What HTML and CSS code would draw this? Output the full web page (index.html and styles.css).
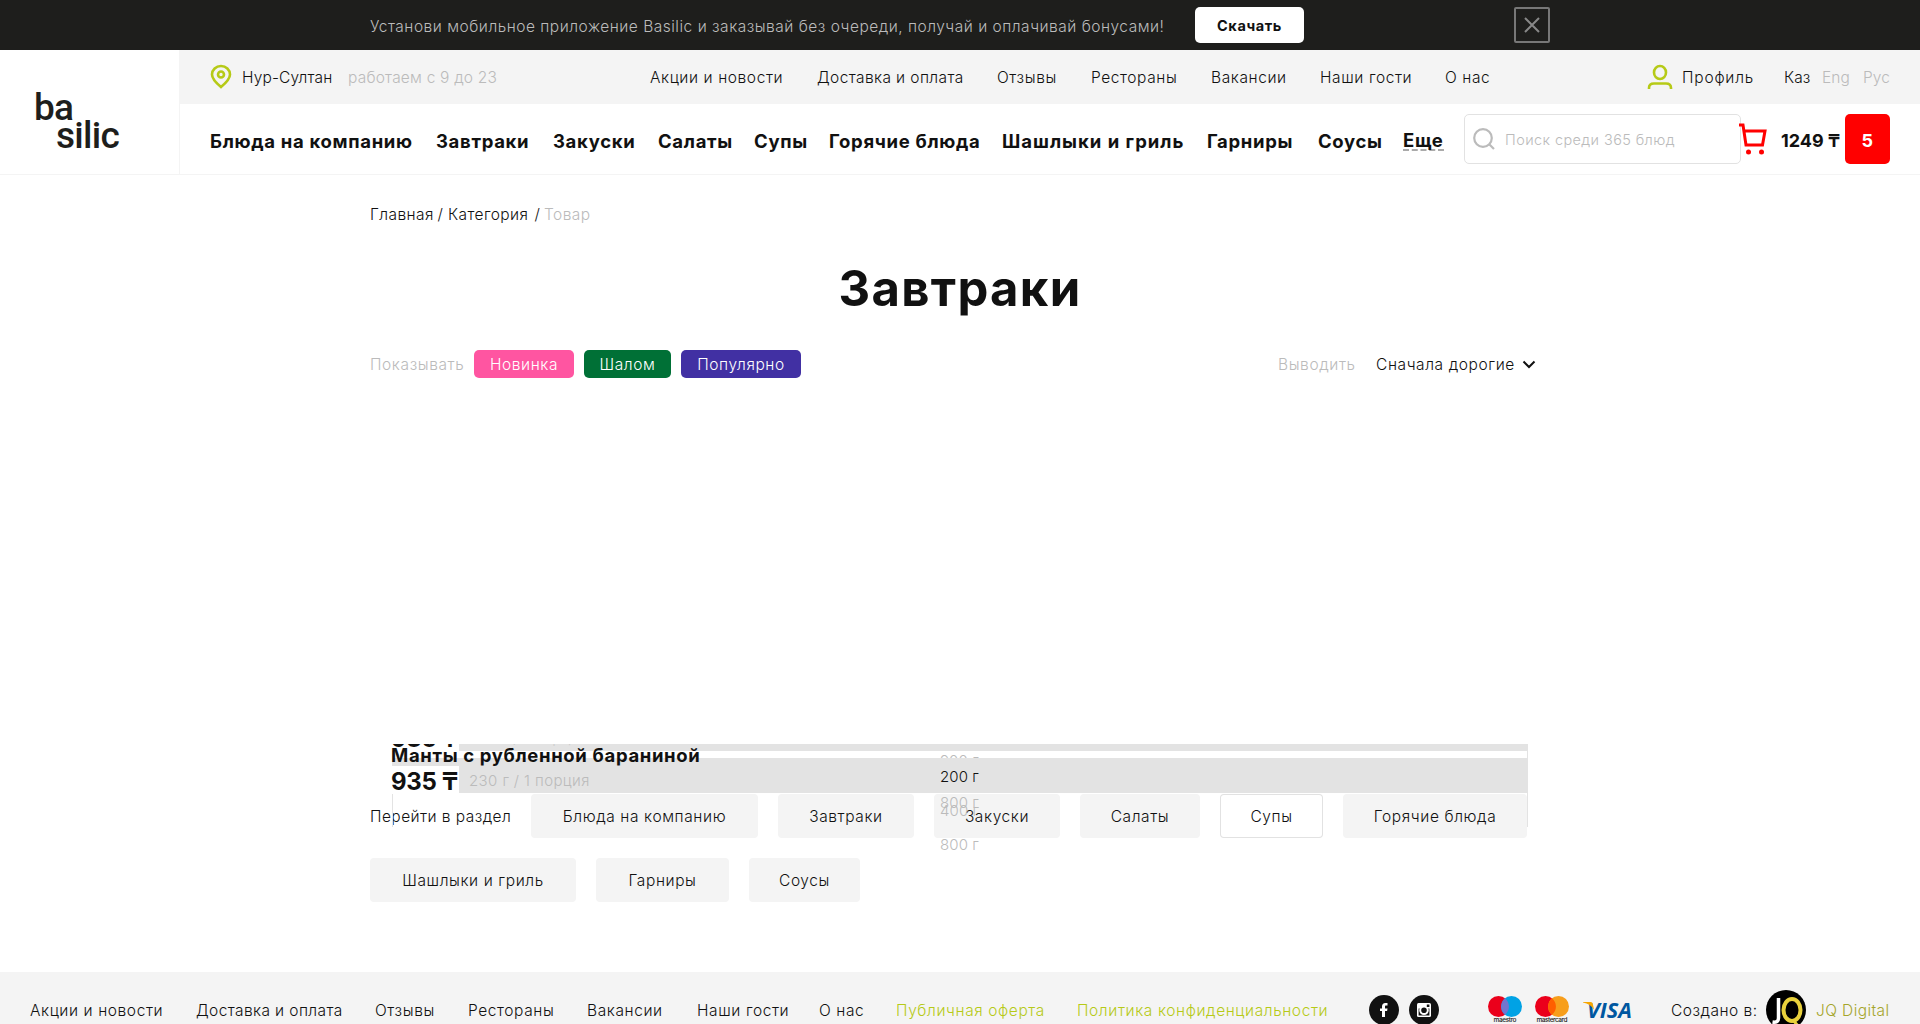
FILE: index.html
```html
<!DOCTYPE html>
<html lang="ru">
<head>
<meta charset="utf-8">
<title>Basilic — Завтраки</title>
<link rel="stylesheet" href="styles.css">
</head>
<body>
<div class="promo">
  <p class="promo-text">Установи мобильное приложение Basilic и заказывай без очереди, получай и оплачивай бонусами!</p>
  <a class="promo-button">Скачать</a>
  <button class="promo-close" aria-label="Закрыть"><svg width="18" height="18" viewBox="0 0 18 18"><path d="M2 2l14 14M16 2L2 16"/></svg></button>
</div>
<header class="header">
  <a class="logo"><span class="logo-top">ba</span><span class="logo-bottom">silic</span></a>
  <div class="header-body">
    <div class="header-info">
      <svg class="pin" width="22" height="24" viewBox="0 0 22 24"><path d="M11 22C5 17 2 13.500 2 9.500a9 8.500 0 0 1 18 0C20 13.500 17 17 11 22z"/><circle cx="11" cy="9.500" r="3"/></svg>
      <span class="city">Нур-Султан</span>
      <span class="hours">работаем с 9 до 23</span>
      <nav class="info-nav"><a>Акции и новости</a><a class="snug">Доставка и оплата</a><a>Отзывы</a><a>Рестораны</a><a>Вакансии</a><a>Наши гости</a><a>О нас</a></nav>
      <svg class="user" width="26" height="26" viewBox="0 0 26 26"><ellipse cx="13" cy="8.500" rx="6" ry="6.500"/><path d="M2 25v-1c0-3 2-4.500 5-4.500h12c3 0 5 1.500 5 4.500v1"/></svg>
      <span class="profile">Профиль</span>
      <nav class="langs"><a class="lang-active">Каз</a><a>Eng</a><a>Рус</a></nav>
    </div>
    <div class="header-menu">
      <nav class="menu-nav"><a>Блюда на компанию</a><a>Завтраки</a><a>Закуски</a><a>Салаты</a><a>Супы</a><a>Горячие блюда</a><a class="loose">Шашлыки и гриль</a><a>Гарниры</a><a>Соусы</a><a class="more">Еще</a></nav>
      <div class="search"><svg width="22" height="22" viewBox="0 0 22 22"><circle cx="10" cy="10" r="8.800"/><path d="M16 16l5 5"/></svg><span>Поиск среди 365 блюд</span></div>
      <svg class="cart" width="27" height="32" viewBox="0 0 27 32"><path d="M0 2h4l3 20h16.500L26 8H5"/><circle cx="9.500" cy="29" r="2.500"/><circle cx="22.500" cy="29" r="2.500"/></svg>
      <span class="total">1249 ₸</span>
      <span class="count">5</span>
    </div>
  </div>
</header>
<main class="content">
  <div class="crumbs"><a>Главная</a><i>/</i><a>Категория</a><i>/</i><span>Товар</span></div>
  <h1 class="title">Завтраки</h1>
  <div class="filters">
    <span class="filter-label">Показывать</span>
    <a class="tag tag-new">Новинка</a><a class="tag tag-shalom">Шалом</a><a class="tag tag-popular">Популярно</a>
    <span class="sort-label">Выводить</span>
    <span class="sort-value">Сначала дорогие</span>
    <svg class="chevron" width="14" height="9" viewBox="0 0 14 9"><path d="M1.500 1.500L7 7l5.500-5.500"/></svg>
  </div>
  <section class="products">
    <div class="band band-thin"></div>
    <div class="band band-wide"></div>
    <div class="card-side"></div>
    <div class="clipped"><span class="old-price">935 ₸</span><span class="old-portion">230 г / 1 порция</span></div>
    <div class="price-back"></div>
    <span class="dish">Манты с рубленной бараниной</span>
    <span class="price">935 ₸</span>
    <span class="portion">230 г / 1 порция</span>
    <span class="option-cut"><span>900 г</span></span>
    <span class="option option-on">200 г</span>
    <span class="option option-b">800 г</span>
    <span class="option option-c">400 г</span>
    <span class="option option-d">800 г</span>
  </section>
  <nav class="sections">
    <span class="sections-label">Перейти в раздел</span>
    <a class="w1">Блюда на компанию</a><a class="w2">Завтраки</a><a class="w3">Закуски</a><a class="w4">Салаты</a><a class="w5 current">Супы</a><a class="w6">Горячие блюда</a><a class="w7">Шашлыки и гриль</a><a class="w8">Гарниры</a><a class="w9">Соусы</a>
  </nav>
</main>
<footer class="footer">
  <nav class="footer-nav"><a>Акции и новости</a><a class="snug">Доставка и оплата</a><a>Отзывы</a><a>Рестораны</a><a>Вакансии</a><a>Наши гости</a><a>О нас</a><a class="legal">Публичная оферта</a><a class="legal">Политика конфиденциальности</a></nav>
  <svg class="facebook" width="30" height="30" viewBox="0 0 30 30"><circle cx="15" cy="15" r="15" fill="#111"/><path d="M13 22v-6h-2v-2.600h2v-1.900c0-2.300 1.300-3.500 3.300-3.500h2.200v2.500h-1.300c-1 0-1.200.5-1.200 1.300v1.600h2.500l-.4 2.600H16V22z" fill="#fff"/></svg>
  <svg class="instagram" width="30" height="30" viewBox="0 0 30 30"><circle cx="15" cy="15" r="15" fill="#111"/><rect x="8" y="8" width="14" height="14" rx="1.500" fill="#fff"/><path d="M9.600 13.500h2v-.5h7v.5h1.800v7H9.600z" fill="#111"/><circle cx="15" cy="15.300" r="3.800" fill="#111" stroke="#fff" stroke-width="2"/><path d="M17.800 9.500h2.600v2.500h-2.600z" fill="#111"/></svg>
  <svg class="maestro" width="34" height="30" viewBox="0 0 34 30"><circle cx="10.500" cy="11.500" r="10.500" fill="#eb001b"/><circle cx="23.500" cy="11.500" r="10.500" fill="#00a2e5"/><path d="M17 3.300a10.500 10.500 0 0 1 0 16.400a10.500 10.500 0 0 1 0-16.400z" fill="#7375cf"/><text x="17" y="27" textLength="23" text-anchor="middle">maestro</text></svg>
  <svg class="mastercard" width="34" height="30" viewBox="0 0 34 30"><circle cx="10.500" cy="11.500" r="10.500" fill="#eb001b"/><circle cx="23.500" cy="11.500" r="10.500" fill="#f79e1b"/><path d="M17 3.300a10.500 10.500 0 0 1 0 16.400a10.500 10.500 0 0 1 0-16.400z" fill="#ff5f00"/><text x="17" y="27" textLength="31" text-anchor="middle">mastercard</text></svg>
  <svg class="visa" width="50" height="18" viewBox="0 0 50 18"><text x="4" y="16.500" textLength="45" lengthAdjust="spacingAndGlyphs">VISA</text><path d="M0 1h7.500c1.500 0 2 .7 2.300 2l1.400 6C9 5 5 2.500 0 1.600z" fill="#f7a600"/></svg>
  <span class="made">Создано в:</span>
  <svg class="jq" width="40" height="40" viewBox="0 0 40 40"><circle cx="20" cy="20" r="20" fill="#000"/><path d="M12.500 8v20q0 5-6 4" fill="none" stroke="#fff" stroke-width="3.500"/><ellipse cx="26" cy="20" rx="8.500" ry="11" fill="none" stroke="#e9d13c" stroke-width="4"/><path d="M27 30l5 6" stroke="#e9d13c" stroke-width="3"/></svg>
  <span class="agency">JQ Digital</span>
</footer>
</body>
</html>
```
FILE: styles.css
```css
* { box-sizing: border-box; }
html { overflow: hidden; }
body { margin: 0; height: 1024px; overflow: hidden; background: #fff; color: #111; font: 300 15.5px/20px Inter, "Noto Sans", sans-serif; letter-spacing: .6px; white-space: nowrap; }
svg { display: block; flex: none; overflow: visible; }
p, h1 { margin: 0; }
.snug { letter-spacing: .4px; }

.promo { height: 50px; padding: 3px 0 3px 370px; display: flex; align-items: center; background: #1e1e1c; color: #bbb; }
.promo-text { width: 825px; padding-top: 3px; letter-spacing: .51px; }
.promo-button { width: 109px; height: 36px; border-radius: 5px; background: #fff; color: #111; font-weight: 700; font-size: 14.5px; line-height: 37px; text-align: center; }
.promo-close { width: 36px; height: 36px; margin-left: 210px; padding: 7px; border: 2px solid #777; border-radius: 2px; background: none; }
.promo-close svg { fill: none; stroke: #888; stroke-width: 2; }

.header { display: flex; height: 125px; border-bottom: 1px solid #f4f4f4; }
.logo { width: 180px; padding: 44px 0 0 34px; border-right: 1px solid #f4f4f4; color: #1e1e1c; font: 500 37px/28px Roboto, sans-serif; letter-spacing: -.7px; }
.logo span { display: block; }
.logo-bottom { padding-left: 22px; }
.header-body { width: 1740px; }
.header-info { height: 54px; padding: 1px 0 0 30px; display: flex; align-items: center; background: #f4f4f4; }
.pin, .user { margin-top: -2px; fill: none; stroke: #b6ca17; stroke-width: 2.6; }
.city { width: 106px; margin-left: 10px; letter-spacing: .15px; }
.hours { width: 302px; color: #bbb; letter-spacing: .2px; }
.info-nav { display: grid; grid-template-columns: 167px 180px 94px 120px 109px 125px 202px; }
.profile { width: 102px; margin-left: 9px; letter-spacing: .8px; }
.langs { display: grid; grid-template-columns: 38px 41px 28px; color: #bbb; letter-spacing: .1px; }
.lang-active { color: #111; }
.header-menu { height: 70px; padding-left: 30px; display: flex; align-items: center; font-size: 18.5px; font-weight: 700; letter-spacing: .68px; }
.menu-nav { padding-top: 3px; display: grid; grid-template-columns: 226px 117px 105px 96px 75px 173px 205px 111px 85px 61px; align-items: center; }
.loose { letter-spacing: 1px; }
.more { width: 41px; line-height: 18px; border-bottom: 2px dashed #aaa; }
.search { width: 277px; height: 50px; padding-left: 8px; display: flex; align-items: center; gap: 10px; border: 1px solid #e2e2e2; border-radius: 5px; color: #bbb; font-size: 14.5px; font-weight: 300; letter-spacing: .4px; }
.search span { padding-top: 2px; }
.search svg { fill: none; stroke: #bbb; stroke-width: 2.2; }
.cart { margin-left: -2px; fill: none; stroke: red; stroke-width: 3; }
.cart circle { fill: red; stroke: none; }
.total { width: 64px; margin-left: 15px; padding-top: 3px; font-size: 18px; letter-spacing: 0; }
.count { width: 45px; height: 50px; border-radius: 5px; background: red; color: #fff; font-size: 18px; line-height: 53px; text-align: center; }

.content { width: 1180px; height: 797px; margin-left: 370px; }
.crumbs { padding-top: 30px; display: flex; letter-spacing: .4px; }
.crumbs a { width: 63px; }
.crumbs a + i + a { width: 83px; }
.crumbs i { width: 15px; font-style: normal; text-align: center; }
.crumbs a + i + a + i { width: 13px; }
.crumbs i + span { color: #bbb; }
.title { margin-top: 34px; text-align: center; font-size: 49px; line-height: 60px; font-weight: 700; letter-spacing: 1.3px; }
.filters { height: 28px; margin-top: 31px; display: flex; align-items: center; letter-spacing: .6px; }
.filter-label { width: 104px; color: #bbb; }
.filter-label, .sort-label, .sort-value { padding-top: 1px; }
.tag { height: 28px; margin-right: 10px; border-radius: 5px; color: #fff; text-align: center; line-height: 29px; }
.tag-new { width: 100px; background: #ff55a1; }
.tag-shalom { width: 87px; background: #007036; }
.tag-popular { width: 120px; background: #4130a3; }
.sort-label { width: 98px; margin-left: 467px; color: #bbb; }
.sort-value { width: 146px; }
.chevron { fill: none; stroke: #111; stroke-width: 2; }

/* Collapsed carousel: the cards' layers overlap one another */
.products { position: relative; height: 416px; }
.products > * { position: absolute; }
.band { right: 22px; background: #e3e3e3; }
.band-thin { left: 89px; top: 366px; height: 7px; }
.band-wide { left: 22px; top: 380px; height: 35px; }
.card-side { left: 22px; right: 22px; top: 373px; height: 76px; border: solid #e3e3e3; border-width: 0 1px; }
.price-back { left: 22px; top: 388px; width: 67px; height: 28px; background: #fff; }
.clipped { left: 21px; top: 366px; width: 230px; height: 4px; overflow: hidden; }
.old-price, .price { font-size: 24px; line-height: 30px; font-weight: 700; letter-spacing: -.3px; }
.old-price, .old-portion { position: absolute; left: 0; bottom: -6px; }
.old-portion { left: 78px; bottom: -2px; color: #ccc; font-size: 15px; letter-spacing: .3px; }
.old-portion { bottom: 0; }
.dish { left: 21px; top: 366px; font-size: 18.5px; font-weight: 700; line-height: 22px; letter-spacing: .65px; }
.price { left: 21px; top: 389px; }
.portion { left: 99px; top: 393px; color: #bbb; font-size: 15px; letter-spacing: .4px; }
.option, .option-cut { left: 570px; color: #bbb; font-size: 15px; letter-spacing: .1px; }
.option-cut { top: 377px; height: 3px; overflow: hidden; }
.option-cut span { display: block; margin-top: -4px; }
.option-on { top: 389px; color: #111; }
.option-b { top: 415px; }
.option-c { top: 423px; }
.option-d { top: 457px; }

.sections { width: 1158px; display: flex; flex-wrap: wrap; gap: 20px; }
.sections-label { width: 141px; height: 44px; line-height: 45px; letter-spacing: .45px; }
.sections a { height: 44px; border-radius: 4px; background: #f4f4f4; line-height: 45px; text-align: center; }
.sections .current { background: #fff; box-shadow: inset 0 0 0 1px #e2e2e2; }
.w1 { width: 227px; }
.w2 { width: 136px; }
.w3 { width: 126px; }
.w4 { width: 120px; }
.w5 { width: 103px; }
.w6 { width: 184px; }
.w7 { width: 206px; }
.w8 { width: 133px; }
.w9 { width: 111px; }

.footer { height: 76px; padding-left: 30px; display: flex; align-items: center; background: #f4f4f4; }
.footer-nav, .made, .agency { padding-top: 2px; }
.footer-nav { display: grid; grid-template-columns: 166px 179px 93px 119px 110px 122px 77px 181px 292px; }
.legal, .agency { color: #b6ca17; }
.instagram { margin-left: 10px; }
.maestro { margin-left: 49px; }
.mastercard { margin-left: 13px; }
.maestro text, .mastercard text { font: 500 6.500px Inter, sans-serif; letter-spacing: 0; fill: #222; }
.visa { margin-left: 14px; }
.visa text { font: italic 700 21px "Open Sans", sans-serif; letter-spacing: 0; fill: #0057a0; }
.made { width: 95px; margin-left: 38px; letter-spacing: .5px; }
.agency { margin-left: 10px; color: #a5a52b; letter-spacing: .4px; }
```
